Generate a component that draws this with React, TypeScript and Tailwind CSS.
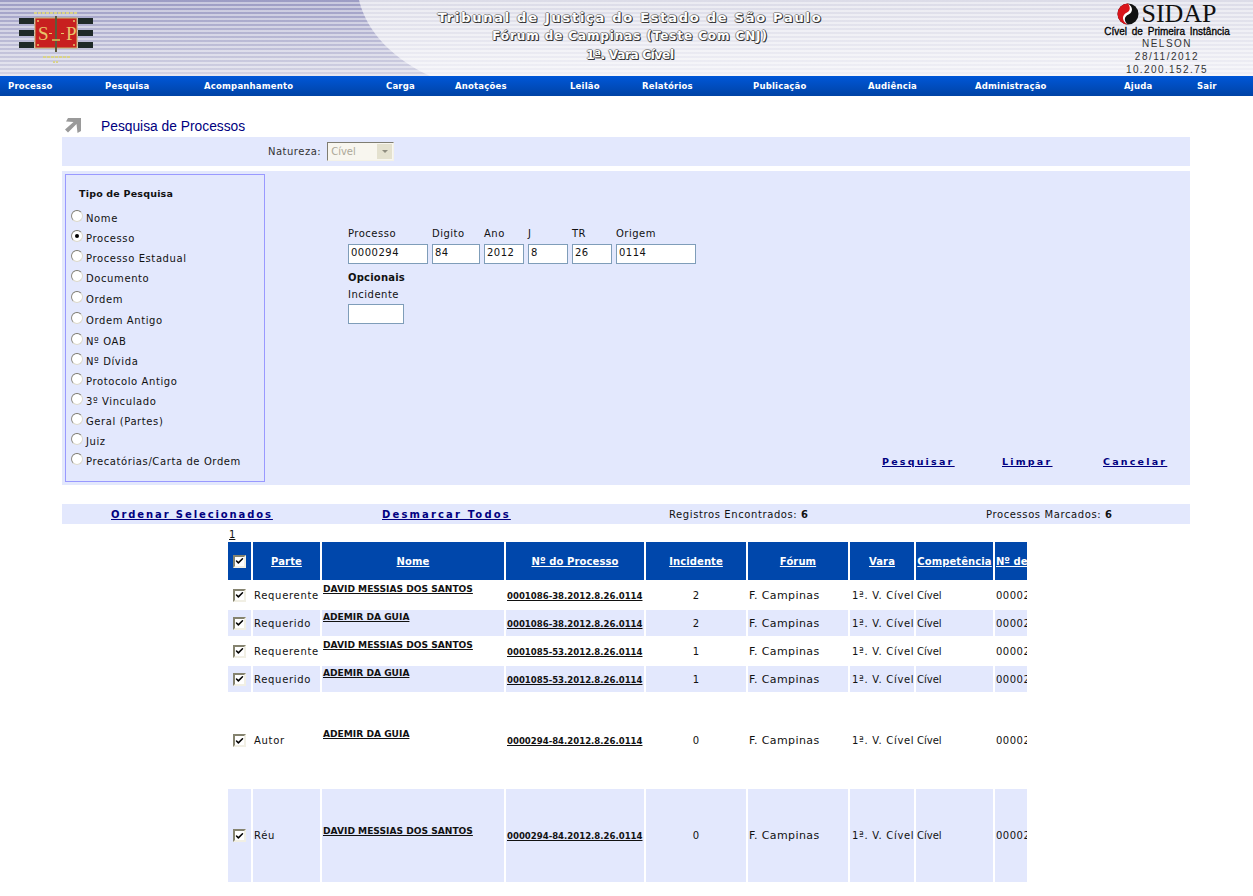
import { Check } from "lucide-react"

const verdana = "font-['DejaVu_Sans',Verdana,sans-serif]"

const menu = [
  { name: "Processo", width: "w-[97px]" },
  { name: "Pesquisa", width: "w-[99px]" },
  { name: "Acompanhamento", width: "w-[182px]" },
  { name: "Carga", width: "w-[69px]" },
  { name: "Anotações", width: "w-[115px]" },
  { name: "Leilão", width: "w-[72px]" },
  { name: "Relatórios", width: "w-[111px]" },
  { name: "Publicação", width: "w-[115px]" },
  { name: "Audiência", width: "w-[107px]" },
  { name: "Administração", width: "w-[149px]" },
  { name: "Ajuda", width: "w-[73px]" },
  { name: "Sair", width: "w-[40px]" },
]

const tipos = [
  { name: "Nome", height: "h-[20px]" },
  { name: "Processo", height: "h-[20px]", checked: true },
  { name: "Processo Estadual", height: "h-[20px]" },
  { name: "Documento", height: "h-[21px]" },
  { name: "Ordem", height: "h-[21px]" },
  { name: "Ordem Antigo", height: "h-[21px]" },
  { name: "Nº OAB", height: "h-[20px]" },
  { name: "Nº Dívida", height: "h-[20px]" },
  { name: "Protocolo Antigo", height: "h-[20px]" },
  { name: "3º Vinculado", height: "h-[20px]" },
  { name: "Geral (Partes)", height: "h-[20px]" },
  { name: "Juiz", height: "h-[20px]" },
  { name: "Precatórias/Carta de Ordem", height: "h-[20px]" },
]

const campos = [
  { label: "Processo", value: "0000294", width: "w-[80px]" },
  { label: "Digito", value: "84", width: "w-[48px]" },
  { label: "Ano", value: "2012", width: "w-[40px]" },
  { label: "J", value: "8", width: "w-[40px]" },
  { label: "TR", value: "26", width: "w-[40px]" },
  { label: "Origem", value: "0114", width: "w-[80px]" },
]

const colunas = [
  { name: "Parte", width: "w-[67px]" },
  { name: "Nome", width: "w-[182px]" },
  { name: "Nº do Processo", width: "w-[138px]" },
  { name: "Incidente", width: "w-[100px]" },
  { name: "Fórum", width: "w-[100px]" },
  { name: "Vara", width: "w-[64px]" },
  { name: "Competência", width: "w-[77px]" },
]

const linhas = [
  { parte: "Requerente", nome: "DAVID MESSIAS DOS SANTOS", processo: "0001086-38.2012.8.26.0114", incidente: "2", height: "h-[26px]", topo: "pt-[1px]" },
  { parte: "Requerido", nome: "ADEMIR DA GUIA", processo: "0001086-38.2012.8.26.0114", incidente: "2", height: "h-[26px]", topo: "pt-[1px]" },
  { parte: "Requerente", nome: "DAVID MESSIAS DOS SANTOS", processo: "0001085-53.2012.8.26.0114", incidente: "1", height: "h-[26px]", topo: "pt-[1px]" },
  { parte: "Requerido", nome: "ADEMIR DA GUIA", processo: "0001085-53.2012.8.26.0114", incidente: "1", height: "h-[26px]", topo: "pt-[1px]" },
  { parte: "Autor", nome: "ADEMIR DA GUIA", processo: "0000294-84.2012.8.26.0114", incidente: "0", height: "h-[93px]", topo: "pt-[34px]" },
  { parte: "Réu", nome: "DAVID MESSIAS DOS SANTOS", processo: "0000294-84.2012.8.26.0114", incidente: "0", height: "h-[93px]", topo: "pt-[36px]" },
]

function BrasaoSP() {
  return (
    <svg width="76" height="56" viewBox="0 0 76 56" className="block">
      <g fill="#1f2a28">
        <rect x="0" y="6" width="15" height="6" />
        <rect x="0" y="18" width="15" height="6" />
        <rect x="0" y="30" width="15" height="6" />
        <rect x="59" y="6" width="15" height="6" />
        <rect x="59" y="18" width="15" height="6" />
        <rect x="59" y="30" width="15" height="6" />
      </g>
      <rect x="16" y="6" width="42" height="30" fill="#c8201f" stroke="#c9b36a" />
      <rect x="36" y="4" width="2" height="36" fill="#5b5a3c" />
      <rect x="33" y="27" width="8" height="2" fill="#c9a14e" />
      <text x="19" y="28" fill="#e8c46a" fontFamily="'Liberation Serif',serif" fontSize="19">S</text>
      <text x="47" y="28" fill="#e8c46a" fontFamily="'Liberation Serif',serif" fontSize="19">P</text>
      <g fill="#e8c46a">
        <circle cx="19" cy="9" r="1" />
        <circle cx="55" cy="9" r="1" />
        <circle cx="19" cy="33" r="1" />
        <circle cx="55" cy="33" r="1" />
        <rect x="30" y="21" width="3" height="1" />
        <rect x="42" y="21" width="3" height="1" />
      </g>
      <path d="M15 1h44" stroke="#d8d28a" strokeWidth="2" strokeDasharray="3 1" />
      <path d="M24 45h28" stroke="#d8d28a" strokeWidth="2" strokeDasharray="3 1" />
      <path d="M34 50h6" stroke="#d8d28a" strokeWidth="2" strokeDasharray="2 1" />
    </svg>
  )
}

function SidapMark() {
  return (
    <svg width="22" height="22" viewBox="0 0 22 22" className="block">
      <circle cx="11" cy="11" r="10.5" fill="#111" />
      <path d="M11 .5A10.5 10.5 0 0 0 11 21.5C5 18 6 13 11 11C16 9 15 4 11 .5Z" fill="#d9141b" />
      <path d="M11 .5C16 4 16.5 9 11.5 11.5C7 13.5 6.5 18 11 21.5C4.5 18.5 4.5 12 10 9.5C13.5 8 13.5 4 11 .5Z" fill="#fff" />
    </svg>
  )
}

function Radio({ checked }: { checked?: boolean }) {
  return (
    <span className="flex h-[12px] w-[12px] items-center justify-center rounded-full border border-[#dcd9cc] border-l-[#8c8a80] border-t-[#7a786e] bg-white">
      {checked && <span className="h-[4px] w-[4px] rounded-full bg-black" />}
    </span>
  )
}

function Checkbox() {
  return (
    <span className="flex h-[13px] w-[13px] items-center justify-center border-2 border-[#f1efe4] border-l-[#85836f] border-t-[#85836f] bg-white">
      <Check size={10} strokeWidth={4} className="text-black" />
    </span>
  )
}

function Header() {
  return (
    <header className="relative h-[76px] overflow-hidden bg-gradient-to-b from-[#dcdce8] to-[#f0f0f6]">
      <svg width="440" height="76" viewBox="0 0 440 76" className="absolute left-0 top-0">
        <defs>
          <linearGradient id="faixa" x1="0" y1="0" x2="0" y2="1">
            <stop offset="0" stopColor="#9c9cc4" />
            <stop offset="1" stopColor="#d4d4e4" />
          </linearGradient>
        </defs>
        <path d="M0 0H359C365 25 385 55 430 76H0Z" fill="url(#faixa)" />
      </svg>
      <div className="absolute inset-0 bg-[repeating-linear-gradient(180deg,transparent_0px,transparent_2px,rgba(255,255,255,0.45)_2px,rgba(255,255,255,0.45)_4px)]" />
      <div className="relative flex h-full">
        <div className="w-[407px] pl-[19px] pt-[12px]">
          <BrasaoSP />
        </div>
        <div className={`flex w-[446px] flex-col items-center pt-[9px] font-bold text-white ${verdana} [text-shadow:1px_1px_0_#333,1px_0_0_#555,0_1px_0_#555,-1px_0_0_#999,0_-1px_0_#999]`}>
          <div className="text-[13px] leading-[18px] tracking-[1.73px]">Tribunal de Justiça do Estado de São Paulo</div>
          <div className="text-[12px] leading-[19px] tracking-[0.9px]">Fórum de Campinas (Teste Com CNJ)</div>
          <div className="text-[12px] leading-[18px] tracking-[-0.3px]">1ª. Vara Cível</div>
        </div>
        <div className="ml-auto mr-[11px] flex w-[150px] flex-col items-center pt-[3px] font-['Liberation_Sans',Arial,sans-serif] text-[10px] text-[#333]">
          <div className="flex h-[22px] items-center gap-[2px]">
            <SidapMark />
            <span className="font-['Liberation_Serif',serif] text-[26px] leading-none text-[#111]">SIDAP</span>
          </div>
          <div className="h-[12px] font-medium leading-[13px] text-black [word-spacing:2px] [-webkit-text-stroke:0.3px_black]">Cível de Primeira Instância</div>
          <div className="h-[13px] leading-[13px] tracking-[1.5px]">NELSON</div>
          <div className="h-[13px] leading-[13px] tracking-[1.5px]">28/11/2012</div>
          <div className="h-[13px] leading-[13px] tracking-[1.4px]">10.200.152.75</div>
        </div>
      </div>
    </header>
  )
}

export default function App() {
  return (
    <div className={`min-h-[896px] bg-white text-[10px] text-[#111] ${verdana}`}>
      <Header />

      <nav className="flex h-[20px] items-center bg-gradient-to-b from-[#0057d8] to-[#0043a6] pl-[8px] text-[8.5px] font-bold tracking-[0.2px] text-white">
        {menu.map((item) => (
          <a key={item.name} className={`block shrink-0 ${item.width}`}>{item.name}</a>
        ))}
      </nav>

      <main className="ml-[62px] w-[1128px]">
        <div className="flex h-[41px] items-end pb-[2px] pl-[3px]">
          <svg width="16" height="15" viewBox="0 0 16 15" className="mb-[2px]">
            <path d="M3 0H16V13L12.5 15L11.5 6L3 14.5L0 11.5L8.5 4L1 3.5Z" fill="#9a9a9a" />
          </svg>
          <h1 className="ml-[20px] font-['Liberation_Sans',Arial,sans-serif] text-[13.8px] leading-[16px] text-[#000080]">Pesquisa de Processos</h1>
        </div>

        <div className="flex h-[29px] items-center bg-[#e3e8fd] pl-[206px]">
          <span className="tracking-[0.5px] text-[#333]">Natureza:</span>
          <span className="ml-[6px] flex h-[19px] w-[67px] items-center justify-between border border-[#f4f2e8] border-l-[#7f7d72] border-t-[#7f7d72] bg-[#f8f6ef] pl-[3px] pr-[1px] text-[#aca899]">
            Cível
            <span className="flex h-[15px] w-[15px] items-center justify-center bg-[#e4e1cf]">
              <span className="h-0 w-0 border-x-[3px] border-t-[3px] border-x-transparent border-t-[#8f8d80]" />
            </span>
          </span>
        </div>

        <section className="mt-[5px] flex h-[314px] bg-[#e3e8fd] p-[3px]">
          <div className="h-[308px] w-[200px] border border-[#9999ff] pl-[5px] pt-[12px]">
            <div className="mb-[9px] h-[14px] pl-[8px] text-[9.5px] font-bold leading-[14px] tracking-[0.2px]">Tipo de Pesquisa</div>
            {tipos.map((tipo) => (
              <label key={tipo.name} className={`flex items-start gap-[3px] ${tipo.height}`}>
                <Radio checked={tipo.checked} />
                <span className="mt-[2px] leading-[14px] tracking-[0.6px]">{tipo.name}</span>
              </label>
            ))}
          </div>

          <div className="flex flex-1 flex-col pl-[83px]">
            <div className="mt-[53px] flex gap-[4px]">
              {campos.map((campo) => (
                <div key={campo.label} className={`flex flex-col ${campo.width}`}>
                  <span className="h-[14px] leading-[14px] tracking-[0.5px]">{campo.label}</span>
                  <span className="mt-[3px] h-[20px] border border-[#7f9db9] bg-white pl-[2px] leading-[16px] tracking-[0.5px]">{campo.value}</span>
                </div>
              ))}
            </div>
            <div className="mt-[7px] h-[14px] font-bold leading-[14px] tracking-[0.2px]">Opcionais</div>
            <div className="mt-[3px] h-[14px] leading-[14px] tracking-[0.5px]">Incidente</div>
            <div className="mt-[2px] h-[20px] w-[56px] border border-[#7f9db9] bg-white" />
            <div className="mt-auto mb-[13px] flex pl-[534px] text-[9.5px] font-bold tracking-[2.2px] text-[#000080] underline">
              <a className="w-[120px]">Pesquisar</a>
              <a className="w-[101px]">Limpar</a>
              <a>Cancelar</a>
            </div>
          </div>
        </section>

        <div className="mt-[19px] flex h-[20px] items-center bg-[#e3e8fd] pl-[49px]">
          <a className="w-[271px] font-bold tracking-[1.9px] text-[#000080] underline">Ordenar Selecionados</a>
          <a className="w-[287px] font-bold tracking-[2.15px] text-[#000080] underline">Desmarcar Todos</a>
          <span className="w-[317px] tracking-[0.6px]">Registros Encontrados: <b>6</b></span>
          <span className="tracking-[0.6px]">Processos Marcados: <b>6</b></span>
        </div>

        <div className="ml-[167px] mt-[4px] h-[12px] leading-[14px] underline">1</div>

        <div className="ml-[164px] w-[801px] overflow-hidden">
          <table className="w-[900px] table-fixed border-separate border-spacing-[2px]">
            <thead>
              <tr className="h-[38px] bg-[#0047ab] font-bold text-white">
                <th className="w-[23px] p-0">
                  <span className="flex justify-center">
                    <Checkbox />
                  </span>
                </th>
                {colunas.map((coluna) => (
                  <th key={coluna.name} className={`${coluna.width} overflow-hidden whitespace-nowrap p-0 text-center text-[10px] tracking-[0.1px] underline`}>
                    {coluna.name}
                  </th>
                ))}
                <th className="overflow-hidden whitespace-nowrap p-0 pl-[1px] text-left underline">Nº de Ordem</th>
              </tr>
            </thead>
            <tbody>
              {linhas.map((linha, i) => (
                <tr key={i} className={`${linha.height} ${i % 2 === 1 ? "bg-[#e3e8fd]" : "bg-white"}`}>
                  <td className="p-0">
                    <span className="flex justify-center">
                      <Checkbox />
                    </span>
                  </td>
                  <td className="whitespace-nowrap p-0 pl-[1px] tracking-[0.7px]">{linha.parte}</td>
                  <td className="whitespace-nowrap p-0 pl-[1px] align-top">
                    <a className={`block text-[9.1px] font-bold underline ${linha.topo}`}>{linha.nome}</a>
                  </td>
                  <td className="whitespace-nowrap p-0 pl-[1px] pt-[2px] text-[8.55px] font-bold underline">{linha.processo}</td>
                  <td className="p-0 text-center">{linha.incidente}</td>
                  <td className="whitespace-nowrap p-0 pl-[1px] pt-[2px] text-[11px] tracking-[0.4px]">F. Campinas</td>
                  <td className="whitespace-nowrap p-0 pl-[2px] tracking-[0.7px]">1ª. V. Cível</td>
                  <td className="whitespace-nowrap p-0 pl-[1px]">Cível</td>
                  <td className="overflow-hidden whitespace-nowrap p-0 pl-[1px] tracking-[0.5px]">0000294</td>
                </tr>
              ))}
            </tbody>
          </table>
        </div>
      </main>
    </div>
  )
}
